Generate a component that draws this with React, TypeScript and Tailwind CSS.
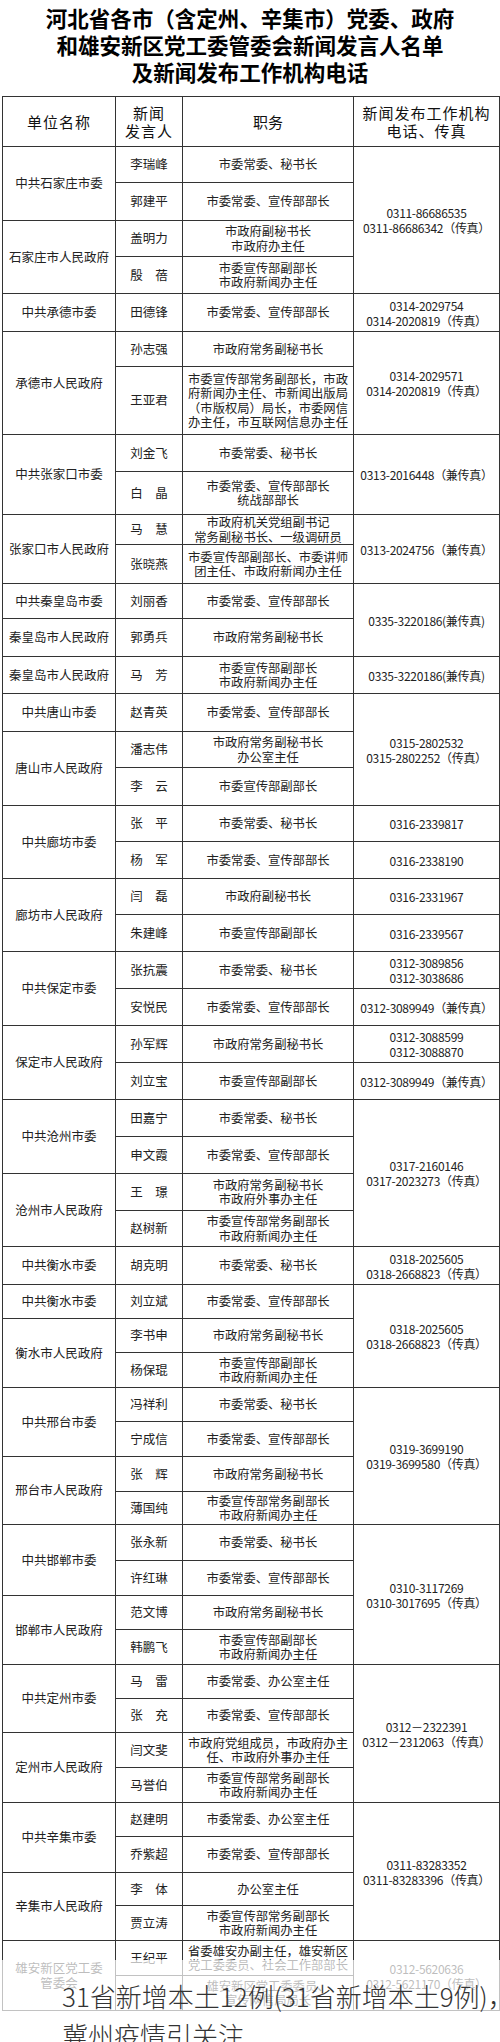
type Cell = { text: string[]; span: number }

type Row = {
  h: string
  name: string
  duty: string[]
  unit?: Cell
  tel?: Cell
}

const rows: Row[] = [
  { h: 'h-[36px]', name: '李瑞峰', duty: ['市委常委、秘书长'], unit: { text: ['中共石家庄市委'], span: 2 }, tel: { text: ['0311-86686535', '0311-86686342（传真）'], span: 4 } },
  { h: 'h-[38px]', name: '郭建平', duty: ['市委常委、宣传部部长'] },
  { h: 'h-[36px]', name: '盖明力', duty: ['市政府副秘书长', '市政府办主任'], unit: { text: ['石家庄市人民政府'], span: 2 } },
  { h: 'h-[37px]', name: '殷　蓓', duty: ['市委宣传部副部长', '市政府新闻办主任'] },
  { h: 'h-[38px]', name: '田德锋', duty: ['市委常委、宣传部部长'], unit: { text: ['中共承德市委'], span: 1 }, tel: { text: ['0314-2029754', '0314-2020819（传真）'], span: 1 } },
  { h: 'h-[35px]', name: '孙志强', duty: ['市政府常务副秘书长'], unit: { text: ['承德市人民政府'], span: 2 }, tel: { text: ['0314-2029571', '0314-2020819（传真）'], span: 2 } },
  { h: 'h-[68px]', name: '王亚君', duty: ['市委宣传部常务副部长，市政', '府新闻办主任、市新闻出版局', '（市版权局）局长，市委网信', '办主任，市互联网信息办主任'] },
  { h: 'h-[37px]', name: '刘金飞', duty: ['市委常委、秘书长'], unit: { text: ['中共张家口市委'], span: 2 }, tel: { text: ['0313-2016448（兼传真）'], span: 2 } },
  { h: 'h-[43px]', name: '白　晶', duty: ['市委常委、宣传部部长', '统战部部长'] },
  { h: 'h-[30px]', name: '马　慧', duty: ['市政府机关党组副书记', '常务副秘书长、一级调研员'], unit: { text: ['张家口市人民政府'], span: 2 }, tel: { text: ['0313-2024756（兼传真）'], span: 2 } },
  { h: 'h-[39px]', name: '张晓燕', duty: ['市委宣传部副部长、市委讲师', '团主任、市政府新闻办主任'] },
  { h: 'h-[35px]', name: '刘丽香', duty: ['市委常委、宣传部部长'], unit: { text: ['中共秦皇岛市委'], span: 1 }, tel: { text: ['0335-3220186(兼传真)'], span: 2 } },
  { h: 'h-[38px]', name: '郭勇兵', duty: ['市政府常务副秘书长'], unit: { text: ['秦皇岛市人民政府'], span: 1 } },
  { h: 'h-[37px]', name: '马　芳', duty: ['市委宣传部副部长', '市政府新闻办主任'], unit: { text: ['秦皇岛市人民政府'], span: 1 }, tel: { text: ['0335-3220186(兼传真)'], span: 1 } },
  { h: 'h-[38px]', name: '赵青英', duty: ['市委常委、宣传部部长'], unit: { text: ['中共唐山市委'], span: 1 }, tel: { text: ['0315-2802532', '0315-2802252（传真）'], span: 3 } },
  { h: 'h-[36px]', name: '潘志伟', duty: ['市政府常务副秘书长', '办公室主任'], unit: { text: ['唐山市人民政府'], span: 2 } },
  { h: 'h-[38px]', name: '李　云', duty: ['市委宣传部副部长'] },
  { h: 'h-[36px]', name: '张　平', duty: ['市委常委、秘书长'], unit: { text: ['中共廊坊市委'], span: 2 }, tel: { text: ['0316-2339817'], span: 1 } },
  { h: 'h-[37px]', name: '杨　军', duty: ['市委常委、宣传部部长'], tel: { text: ['0316-2338190'], span: 1 } },
  { h: 'h-[36px]', name: '闫　磊', duty: ['市政府副秘书长'], unit: { text: ['廊坊市人民政府'], span: 2 }, tel: { text: ['0316-2331967'], span: 1 } },
  { h: 'h-[37px]', name: '朱建峰', duty: ['市委宣传部副部长'], tel: { text: ['0316-2339567'], span: 1 } },
  { h: 'h-[37px]', name: '张抗震', duty: ['市委常委、秘书长'], unit: { text: ['中共保定市委'], span: 2 }, tel: { text: ['0312-3089856', '0312-3038686'], span: 1 } },
  { h: 'h-[37px]', name: '安悦民', duty: ['市委常委、宣传部部长'], tel: { text: ['0312-3089949（兼传真）'], span: 1 } },
  { h: 'h-[37px]', name: '孙军辉', duty: ['市政府常务副秘书长'], unit: { text: ['保定市人民政府'], span: 2 }, tel: { text: ['0312-3088599', '0312-3088870'], span: 1 } },
  { h: 'h-[37px]', name: '刘立宝', duty: ['市委宣传部副部长'], tel: { text: ['0312-3089949（兼传真）'], span: 1 } },
  { h: 'h-[37px]', name: '田嘉宁', duty: ['市委常委、秘书长'], unit: { text: ['中共沧州市委'], span: 2 }, tel: { text: ['0317-2160146', '0317-2023273（传真）'], span: 4 } },
  { h: 'h-[37px]', name: '申文霞', duty: ['市委常委、宣传部部长'] },
  { h: 'h-[37px]', name: '王　璟', duty: ['市政府常务副秘书长', '市政府外事办主任'], unit: { text: ['沧州市人民政府'], span: 2 } },
  { h: 'h-[36px]', name: '赵树新', duty: ['市委宣传部常务副部长', '市政府新闻办主任'] },
  { h: 'h-[38px]', name: '胡克明', duty: ['市委常委、秘书长'], unit: { text: ['中共衡水市委'], span: 1 }, tel: { text: ['0318-2025605', '0318-2668823（传真）'], span: 1 } },
  { h: 'h-[34px]', name: '刘立斌', duty: ['市委常委、宣传部部长'], unit: { text: ['中共衡水市委'], span: 1 }, tel: { text: ['0318-2025605', '0318-2668823（传真）'], span: 3 } },
  { h: 'h-[34px]', name: '李书申', duty: ['市政府常务副秘书长'], unit: { text: ['衡水市人民政府'], span: 2 } },
  { h: 'h-[35px]', name: '杨保琨', duty: ['市委宣传部副部长', '市政府新闻办主任'] },
  { h: 'h-[34px]', name: '冯祥利', duty: ['市委常委、秘书长'], unit: { text: ['中共邢台市委'], span: 2 }, tel: { text: ['0319-3699190', '0319-3699580（传真）'], span: 4 } },
  { h: 'h-[35px]', name: '宁成信', duty: ['市委常委、宣传部部长'] },
  { h: 'h-[35px]', name: '张　辉', duty: ['市政府常务副秘书长'], unit: { text: ['邢台市人民政府'], span: 2 } },
  { h: 'h-[33px]', name: '薄国纯', duty: ['市委宣传部常务副部长', '市政府新闻办主任'] },
  { h: 'h-[36px]', name: '张永新', duty: ['市委常委、秘书长'], unit: { text: ['中共邯郸市委'], span: 2 }, tel: { text: ['0310-3117269', '0310-3017695（传真）'], span: 4 } },
  { h: 'h-[35px]', name: '许红琳', duty: ['市委常委、宣传部部长'] },
  { h: 'h-[34px]', name: '范文博', duty: ['市政府常务副秘书长'], unit: { text: ['邯郸市人民政府'], span: 2 } },
  { h: 'h-[35px]', name: '韩鹏飞', duty: ['市委宣传部副部长', '市政府新闻办主任'] },
  { h: 'h-[34px]', name: '马　雷', duty: ['市委常委、办公室主任'], unit: { text: ['中共定州市委'], span: 2 }, tel: { text: ['0312－2322391', '0312－2312063（传真）'], span: 4 } },
  { h: 'h-[34px]', name: '张　充', duty: ['市委常委、宣传部部长'] },
  { h: 'h-[35px]', name: '闫文斐', duty: ['市政府党组成员，市政府办主', '任、市政府外事办主任'], unit: { text: ['定州市人民政府'], span: 2 } },
  { h: 'h-[35px]', name: '马誉伯', duty: ['市委宣传部常务副部长', '市政府新闻办主任'] },
  { h: 'h-[34px]', name: '赵建明', duty: ['市委常委、办公室主任'], unit: { text: ['中共辛集市委'], span: 2 }, tel: { text: ['0311-83283352', '0311-83283396（传真）'], span: 4 } },
  { h: 'h-[36px]', name: '乔紫超', duty: ['市委常委、宣传部部长'] },
  { h: 'h-[33px]', name: '李　体', duty: ['办公室主任'], unit: { text: ['辛集市人民政府'], span: 2 } },
  { h: 'h-[35px]', name: '贾立涛', duty: ['市委宣传部常务副部长', '市政府新闻办主任'] },
  { h: 'h-[35px]', name: '王纪平', duty: ['省委雄安办副主任，雄安新区', '党工委委员、社会工作部部长'], unit: { text: ['雄安新区党工委', '管委会'], span: 2 }, tel: { text: ['0312-5620636', '0312-5621170（传真）'], span: 2 } },
  { h: 'h-[35px]', name: '', duty: ['雄安新区党工委委员、', '宣传网信局局长'] },
]

function Lines({ text }: { text: string[] }) {
  return (
    <>
      {text.map((t, i) => (
        <div key={i}>{t}</div>
      ))}
    </>
  )
}

export default function App() {
  return (
    <div className="relative h-[2042px] w-[500px] overflow-hidden bg-white font-['Noto_Sans_CJK_SC',sans-serif] text-[#222]">
      {/* title */}
      <div className="pt-[4px] text-center text-[21.5px] font-bold leading-[27px] text-black">
        <div>河北省各市（含定州、辛集市）党委、政府</div>
        <div>和雄安新区党工委管委会新闻发言人名单</div>
        <div>及新闻发布工作机构电话</div>
      </div>

      <table className="mt-[11px] ml-[2px] w-[497px] table-fixed border-collapse border border-[#333]">
        <colgroup>
          <col className="w-[113px]" />
          <col className="w-[67px]" />
          <col className="w-[171px]" />
          <col className="w-[146px]" />
        </colgroup>
        <thead>
          <tr className="h-[50px] text-[15px] leading-[18px] text-[#111]">
            <th className="border border-[#333] font-normal tracking-[1px]">单位名称</th>
            <th className="border border-[#333] font-normal tracking-[1px]">
              <div>新闻</div>
              <div>发言人</div>
            </th>
            <th className="border border-[#333] font-normal">职务</th>
            <th className="border border-[#333] font-normal tracking-[1px]">
              <div>新闻发布工作机构</div>
              <div>电话、传真</div>
            </th>
          </tr>
        </thead>
        <tbody className="text-[12.3px] leading-[14.5px]">
          {rows.map((row, ix) => (
            <tr className={row.h} key={ix}>
              {row.unit && (
                <td rowSpan={row.unit.span} className="border border-[#333] px-[2px] text-center text-[12.5px]">
                  <Lines text={row.unit.text} />
                </td>
              )}
              <td className="border border-[#333] text-center text-[12.5px] whitespace-nowrap">{row.name}</td>
              <td className="border border-[#333] px-[3px] text-center whitespace-nowrap">
                <Lines text={row.duty} />
              </td>
              {row.tel && (
                <td rowSpan={row.tel.span} className="border border-[#333] text-center text-[12px] leading-[15px] tracking-[-0.3px] whitespace-nowrap">
                  <Lines text={row.tel.text} />
                </td>
              )}
            </tr>
          ))}
        </tbody>
      </table>

      {/* caption laid over the bottom of the picture */}
      <div className="absolute inset-x-0 top-[1960px] bottom-0 bg-white/70">
        <div className="pt-[16px] pl-[62px] text-[26px] leading-[39px] font-light whitespace-nowrap text-[#333]">
          <div>31省新增本土12例(31省新增本土9例)，</div>
          <div>冀州疫情引关注</div>
        </div>
      </div>
    </div>
  )
}
